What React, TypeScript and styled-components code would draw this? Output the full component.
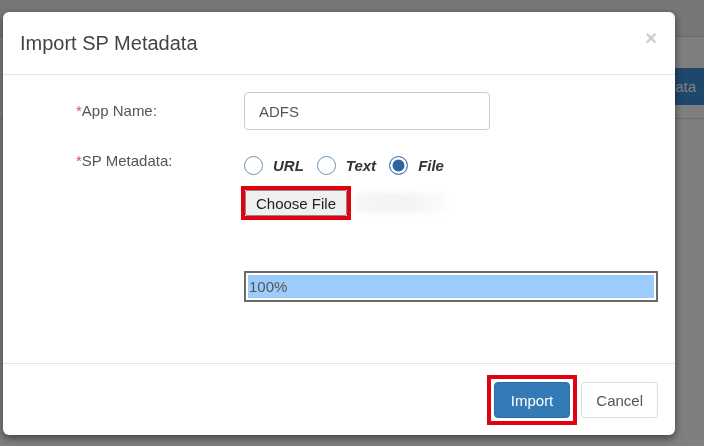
import React from 'react';
import styled, { createGlobalStyle } from 'styled-components';

const GlobalStyle = createGlobalStyle`
  html, body {
    margin: 0;
    padding: 0;
    background: #fff;
    font-family: "Liberation Sans", Arial, sans-serif;
  }
  * { box-sizing: border-box; }
`;

// page that sits under the backdrop
const Page = styled.div`
  width: 704px;
  height: 446px;
  overflow: hidden;
  background: #fff;
`;

const TopBar = styled.div`
  height: 37px;
  background: #eeeeee;
  border-bottom: 1px solid #d6d6d6;
`;

const ToolRow = styled.div`
  display: flex;
  justify-content: flex-end;
  padding-top: 31px;
  margin-right: -4px;
  border-bottom: 1px solid #ddd;
  padding-bottom: 13px;
`;

const PageButton = styled.button`
  height: 37px;
  padding: 0 12px;
  border: 0;
  background: #3d8fd8;
  color: #fff;
  font: 15px "Liberation Sans", Arial, sans-serif;
`;

const Backdrop = styled.div`
  position: fixed;
  inset: 0;
  background: rgba(0, 0, 0, 0.5);
`;

const Dialog = styled.div`
  position: fixed;
  left: 3px;
  top: 12px;
  width: 672px;
  background: #fff;
  border-radius: 6px;
  box-shadow: 0 3px 9px rgba(0, 0, 0, 0.5);
  color: #333;
`;

const Header = styled.div`
  height: 63px;
  display: flex;
  align-items: center;
  justify-content: space-between;
  padding: 0 18px 0 17px;
  border-bottom: 1px solid #e5e5e5;
`;

const Title = styled.h4`
  margin: 0;
  font-size: 20px;
  font-weight: normal;
  color: #444;
`;

const Close = styled.span`
  margin-top: -10px;
  font-size: 20px;
  font-weight: bold;
  line-height: 1;
  color: #cdcdcd;
`;

const Body = styled.div`
  height: 288px;
  padding: 17px 0 0 73px;
  display: grid;
  grid-template-columns: 168px 414px;
  grid-auto-rows: min-content;
  row-gap: 20px;
`;

const Label = styled.label<{ $top?: boolean }>`
  font-size: 15px;
  color: #555;
  line-height: 22px;
  align-self: ${(p) => (p.$top ? 'start' : 'center')};
`;

const Star = styled.span`
  color: #d9534f;
`;

const TextInput = styled.input`
  width: 246px;
  height: 38px;
  padding: 0 14px;
  border: 1px solid #ccc;
  border-radius: 4px;
  font: 15px "Liberation Sans", Arial, sans-serif;
  color: #555;
  outline: none;
`;

const Field = styled.div`
  display: flex;
  flex-direction: column;
  align-items: flex-start;
`;

const RadioGroup = styled.div`
  display: flex;
  align-items: center;
  height: 26px;
  margin-top: 2px;
`;

const RadioItem = styled.span`
  display: flex;
  align-items: center;
  margin-right: 13px;
`;

const RadioCircle = styled.span<{ $checked?: boolean }>`
  width: 19px;
  height: 19px;
  border-radius: 50%;
  border: 1.5px solid ${(p) => (p.$checked ? '#4a7bb0' : '#6f93b8')};
  background: ${(p) => (p.$checked ? '#2c64a0' : '#fff')};
  box-shadow: ${(p) => (p.$checked ? 'inset 0 0 0 2.5px #fff' : 'none')};
  margin-right: 10px;
`;

const RadioText = styled.span`
  font-size: 15px;
  font-weight: bold;
  font-style: italic;
  color: #333;
`;

const FileRow = styled.div`
  display: flex;
  align-items: center;
  margin-top: 12px;
  margin-left: 1px;
`;

const Highlight = styled.span<{ $offset: number }>`
  display: inline-flex;
  outline: 4px solid #e3000f;
  outline-offset: ${(p) => p.$offset}px;
`;

const FileButton = styled.button`
  height: 26px;
  padding: 0 10px;
  background: #efefef;
  border: 1px solid #8a8a8a;
  border-radius: 2px;
  font: 15px "Liberation Sans", Arial, sans-serif;
  color: #222;
`;

const Blurred = styled.span`
  width: 92px;
  height: 20px;
  margin-left: 8px;
  background: linear-gradient(90deg, #f6f6f6 0%, #f3f3f3 60%, #fdfdfd 100%);
  filter: blur(2px);
`;

const Progress = styled.div`
  width: 414px;
  height: 31px;
  margin-top: 55px;
  border: 2px solid #6a6a6a;
  padding: 2px;
  background: #fff;
`;

const ProgressFill = styled.div`
  height: 100%;
  background: #9cccfb;
  font-size: 15px;
  line-height: 23px;
  color: #555;
  padding-left: 1px;
`;

const Footer = styled.div`
  height: 72px;
  display: flex;
  justify-content: flex-end;
  align-items: flex-start;
  padding: 18px 17px 0 0;
  border-top: 1px solid #e5e5e5;
`;

const Btn = styled.button<{ $primary?: boolean }>`
  height: 36px;
  padding: 0 ${(p) => (p.$primary ? 16 : 14)}px;
  border-radius: 4px;
  border: 1px solid ${(p) => (p.$primary ? '#2e6da4' : '#ddd')};
  background: ${(p) => (p.$primary ? '#337ab7' : '#fff')};
  color: ${(p) => (p.$primary ? '#fff' : '#555')};
  font: 15px "Liberation Sans", Arial, sans-serif;
`;

const Spacer = styled.span`
  width: 11px;
`;

export default function App() {
  const pct = 100;
  return (
    <>
      <GlobalStyle />
      <Page>
        <TopBar />
        <ToolRow>
          <PageButton>Import SP Metadata</PageButton>
        </ToolRow>
      </Page>
      <Backdrop />
      <Dialog>
        <Header>
          <Title>Import SP Metadata</Title>
          <Close>×</Close>
        </Header>
        <Body>
          <Label>
            <Star>*</Star>App Name:
          </Label>
          <TextInput defaultValue="ADFS" />

          <Label $top>
            <Star>*</Star>SP Metadata:
          </Label>
          <Field>
            <RadioGroup>
              <RadioItem>
                <RadioCircle />
                <RadioText>URL</RadioText>
              </RadioItem>
              <RadioItem>
                <RadioCircle />
                <RadioText>Text</RadioText>
              </RadioItem>
              <RadioItem>
                <RadioCircle $checked />
                <RadioText>File</RadioText>
              </RadioItem>
            </RadioGroup>
            <FileRow>
              <Highlight $offset={0}>
                <FileButton>Choose File</FileButton>
              </Highlight>
              <Blurred />
            </FileRow>
            <Progress>
              <ProgressFill style={{ width: `${pct}%` }}>{pct}%</ProgressFill>
            </Progress>
          </Field>
        </Body>
        <Footer>
          <Highlight $offset={3}>
            <Btn $primary>Import</Btn>
          </Highlight>
          <Spacer />
          <Btn>Cancel</Btn>
        </Footer>
      </Dialog>
    </>
  );
}
